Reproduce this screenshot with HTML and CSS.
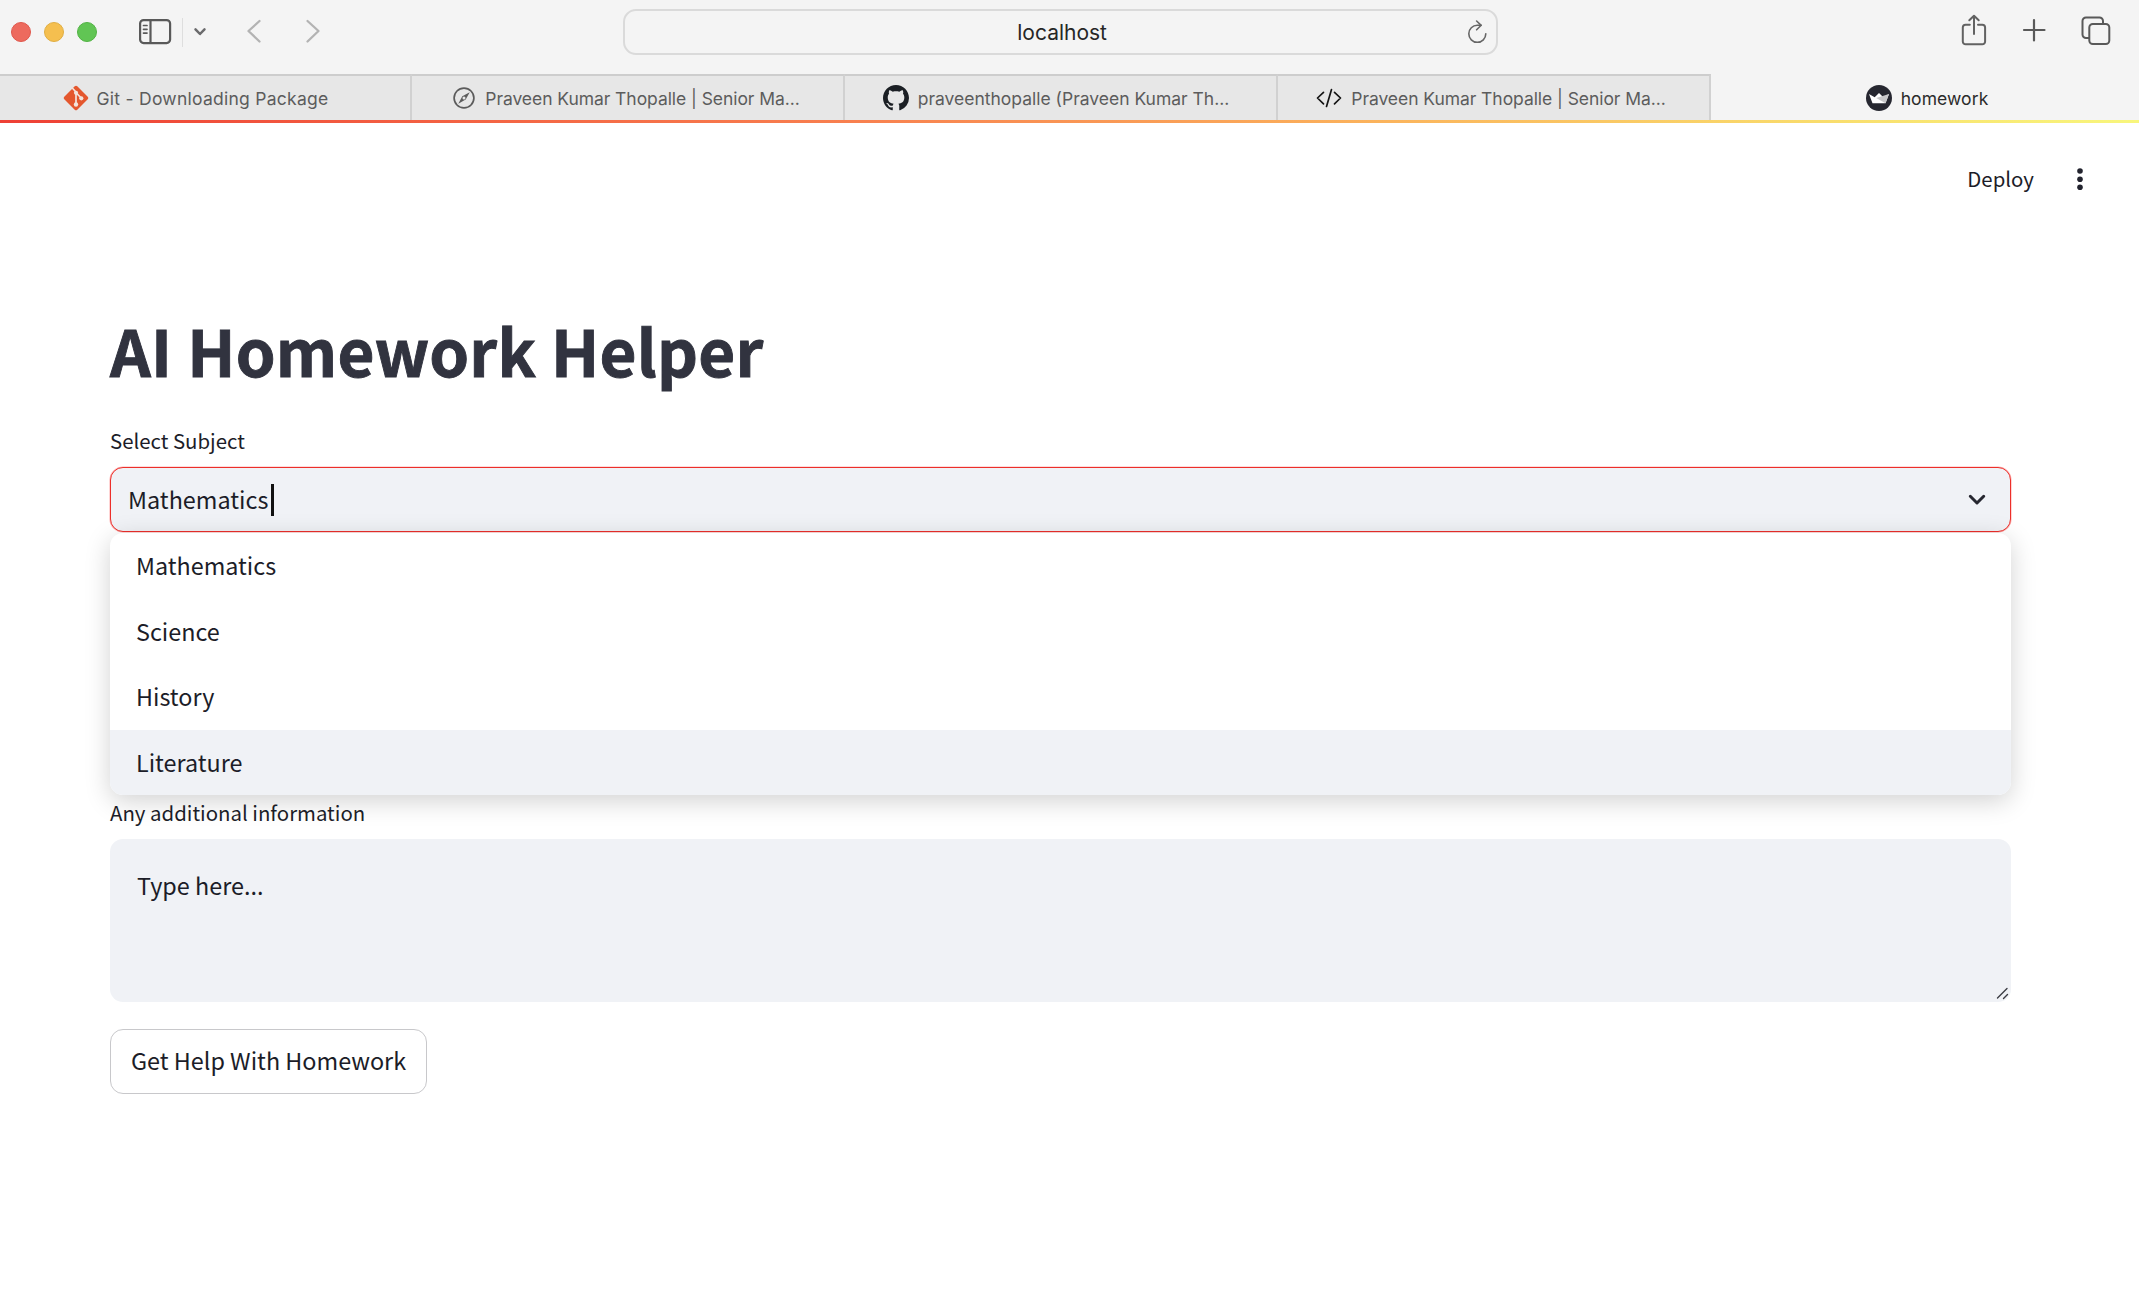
FILE: index.html
```html
<!DOCTYPE html>
<html lang="en">
<head>
<meta charset="utf-8">
<title>homework</title>
<link rel="stylesheet" href="styles.css">
</head>
<body>
<div class="window">
  <div class="toolbar">
    <div class="toolbar-left">
      <span class="light light-close"></span>
      <span class="light light-min"></span>
      <span class="light light-max"></span>
      <svg class="icon-sidebar" width="34" height="28" viewBox="0 0 34 28" fill="none" stroke="#595959" stroke-width="2.2"><rect x="2.1" y="2.1" width="30" height="23" rx="3.5"/><path d="M12.5 2v23"/><path d="M5.500 7.500h3.500M5.500 11.300h3.500M5.500 15.100h3.500" stroke-width="1.700" stroke-linecap="round"/></svg>
      <span class="divider"></span>
      <svg class="icon-down" width="14" height="10" viewBox="0 0 14 10" fill="none" stroke="#6b6b6d" stroke-width="2.500" stroke-linecap="round" stroke-linejoin="round"><path d="M2.500 2.300 7 7l4.500-4.700"/></svg>
      <svg class="icon-back" width="16" height="26" viewBox="0 0 16 26" fill="none" stroke="#b3b3b3" stroke-width="2.300" stroke-linecap="round" stroke-linejoin="round"><path d="M13.500 3 2.500 13l11 10.500"/></svg>
      <svg class="icon-forward" width="16" height="26" viewBox="0 0 16 26" fill="none" stroke="#b3b3b3" stroke-width="2.300" stroke-linecap="round" stroke-linejoin="round"><path d="M2.500 3 13.500 13l-11 10.500"/></svg>
    </div>
    <div class="address">
      <span class="address-text">localhost</span>
      <svg class="icon-reload" width="22" height="26" viewBox="0 0 22 26" fill="none" stroke="#666" stroke-width="1.600" stroke-linecap="round" stroke-linejoin="round"><path d="M15 6.300H11.300A8.500 8.500 0 1 0 19.800 14.800"/><path d="M10.600 2 15.200 6.300 10.600 10.800"/></svg>
    </div>
    <div class="toolbar-right">
      <svg class="icon-share" width="28" height="34" viewBox="0 0 28 34" fill="none" stroke="#626262" stroke-width="2" stroke-linecap="round" stroke-linejoin="round"><path d="M9.800 11.700H5.600A2.800 2.800 0 0 0 2.800 14.500v14a2.800 2.800 0 0 0 2.800 2.800h16.700a2.800 2.800 0 0 0 2.800-2.800v-14a2.800 2.800 0 0 0-2.800-2.800H18"/><path d="M14 21V3M9.300 7.300 14 2.800l4.700 4.500"/></svg>
      <svg width="24" height="24" viewBox="0 0 24 24" fill="none" stroke="#595959" stroke-width="2.200" stroke-linecap="round"><path d="M12 2v20.500M2 12h20.500"/></svg>
      <svg class="icon-overview" width="30" height="30" viewBox="0 0 30 30" fill="none" stroke="#595959" stroke-width="2"><path d="M8 22H5a3.500 3.500 0 0 1-3.500-3.500V5A3.500 3.500 0 0 1 5 1.500h13.500A3.500 3.500 0 0 1 22 5v3"/><rect x="8.300" y="8" width="20" height="20" rx="3.500"/></svg>
    </div>
  </div>
  <div class="tabs">
    <div class="tab tab-git">
      <svg width="28" height="28" viewBox="0 0 28 28"><rect x="4.800" y="4.800" width="18.400" height="18.400" rx="1.800" transform="rotate(45 14 14)" fill="#e4572e"/><g stroke="#f3e3dc" stroke-width="1.700" fill="none"><path d="M9.800 3.500 14 8v12.500M14 8.700l5.200 5.300"/></g><g fill="#f3e3dc"><circle cx="14" cy="8.800" r="2.100"/><circle cx="14" cy="20.500" r="2.200"/><circle cx="19.300" cy="14.300" r="2.100"/></g></svg>
      <span class="tab-text">Git - Downloading Package</span>
    </div>
    <div class="tab tab-compass">
      <svg width="22" height="22" viewBox="0 0 22 22"><circle cx="11" cy="11" r="9.900" fill="none" stroke="#5c5c5c" stroke-width="1.700"/><path d="M16.700 5.200 12.700 12.600 5.300 16.700 9.300 9.300Z" fill="#5c5c5c"/><circle cx="11" cy="11" r="1.500" fill="#e7e7e7"/></svg>
      <span class="tab-text">Praveen Kumar Thopalle | Senior Ma...</span>
    </div>
    <div class="tab tab-github">
      <svg width="26" height="26" viewBox="0 0 16 16" fill="#1b1f24"><path d="M8 0C3.580 0 0 3.580 0 8c0 3.540 2.290 6.530 5.470 7.590.4.070.55-.17.55-.38 0-.19-.01-.82-.01-1.490-2.010.37-2.530-.49-2.690-.94-.09-.23-.48-.94-.82-1.130-.28-.15-.68-.52-.01-.53.63-.01 1.080.58 1.230.82.72 1.210 1.870.87 2.330.66.07-.52.28-.87.51-1.070-1.780-.2-3.640-.89-3.640-3.950 0-.87.31-1.590.82-2.150-.08-.2-.36-1.020.08-2.120 0 0 .67-.21 2.200.82.64-.18 1.320-.27 2-.27s1.360.09 2 .27c1.530-1.040 2.200-.82 2.200-.82.44 1.100.16 1.920.08 2.120.51.56.82 1.270.82 2.150 0 3.070-1.870 3.750-3.650 3.950.29.25.54.73.54 1.480 0 1.070-.01 1.930-.01 2.200 0 .21.150.46.550.38A8.010 8.010 0 0 0 16 8c0-4.420-3.580-8-8-8Z"/></svg>
      <span class="tab-text">praveenthopalle (Praveen Kumar Th...</span>
    </div>
    <div class="tab tab-code">
      <svg width="26" height="20" viewBox="0 0 26 20" fill="none" stroke="#151515" stroke-width="1.700" stroke-linecap="round" stroke-linejoin="round"><path d="M7.500 4.300 1.500 10l6 5.800M18.500 4.300l6 5.700-6 5.800M15.500 1.500l-5 17"/></svg>
      <span class="tab-text">Praveen Kumar Thopalle | Senior Ma...</span>
    </div>
    <div class="tab tab-active">
      <svg width="26" height="26" viewBox="0 0 26 26"><circle cx="13" cy="13" r="13" fill="#262730"/><path d="M3 9l5.700 3.200L13 8l4.300 4.200L23 9l-3.500 9.300H6.500Z" fill="#fff"/><path d="M10.200 13 23 9l-3.500 9.300Z" fill="#c7c7c9"/></svg>
      <span class="tab-text">homework</span>
    </div>
  </div>
  <div class="decoration"></div>
  <div class="app-header">
    <span class="deploy">Deploy</span>
    <svg width="8" height="24" viewBox="0 0 8 24" fill="#22232e"><circle cx="4" cy="4" r="2.800"/><circle cx="4" cy="12.200" r="2.800"/><circle cx="4" cy="20.300" r="2.800"/></svg>
  </div>
  <main class="content">
    <h1 class="title">AI Homework Helper</h1>
    <div class="label">Select Subject</div>
    <div class="select">
      <span class="select-text">Mathematics</span><span class="caret"></span>
      <svg class="select-arrow" width="18" height="12" viewBox="0 0 18 12" fill="none" stroke="#262730" stroke-width="3" stroke-linecap="round" stroke-linejoin="round"><path d="M2.300 2.300 9 9l6.700-6.700"/></svg>
    </div>
    <ul class="menu">
      <li>Mathematics</li>
      <li>Science</li>
      <li>History</li>
      <li class="hovered">Literature</li>
    </ul>
    <div class="label label-info">Any additional information</div>
    <div class="textarea">
      <span>Type here...</span>
      <svg class="grip" width="13" height="13" viewBox="0 0 13 13" stroke="#3c3d44" stroke-width="1.400" stroke-linecap="round"><path d="M1.500 11 11 1.500M7.500 11.500l4-4"/></svg>
    </div>
    <div class="button">Get Help With Homework</div>
  </main>
</div>
</body>
</html>
```
FILE: styles.css
```css
* { box-sizing: border-box; }

body {
  margin: 0;
  background: #fff;
  color: #1c1d28;
  font-family: "Noto Sans CJK SC", "Noto Sans", sans-serif;
}

svg { display: block; flex: none; }

.window {
  width: 2139px;
  height: 1311px;
  overflow: hidden;
  background: #fff;
}

/* Browser toolbar */
.toolbar {
  height: 74px;
  display: grid;
  grid-template-columns: 623px 875px 1fr;
  background: #f4f4f4;
  font-family: Inter, sans-serif;
}

.toolbar-left { display: flex; align-items: center; height: 64px; padding-left: 11px; }
.light { width: 20px; height: 20px; border-radius: 50%; margin-right: 13px; border: 1px solid; }
.light-close { background: #ed6a5e; border-color: #e0574c; }
.light-min { background: #f5bf4f; border-color: #e0ae43; }
.light-max { background: #61c554; border-color: #52b344; }
.icon-sidebar { margin: -1px 0 0 28px; }
.divider { width: 1px; height: 29px; background: #dedede; margin-left: 10px; }
.icon-down { margin-left: 10px; }
.icon-back { margin: -2px 0 0 39px; }
.icon-forward { margin: -2px 0 0 43px; }

.address {
  height: 46px;
  margin-top: 9px;
  border: 2px solid #dadada;
  border-radius: 13px;
  display: flex;
  align-items: center;
  justify-content: flex-end;
  padding-right: 8px;
}
.address-text { margin: 2px 359px 0 auto; font-size: 21px; line-height: 42px; color: #262626; }

.toolbar-right {
  display: flex;
  align-items: center;
  justify-content: flex-end;
  height: 60px;
  gap: 34px;
  padding-right: 28px;
}
.icon-overview { margin: 2px 0 0 1px; }

/* Tab strip */
.tabs {
  height: 46px;
  display: grid;
  grid-template-columns: 412px 433px 433px 433px 1fr;
  background: #f4f4f4;
  font-family: Inter, sans-serif;
}
.tab {
  display: flex;
  align-items: center;
  justify-content: center;
  gap: 10px;
  background: #e7e7e7;
  border-top: 2px solid #cdcdcd;
  border-right: 2px solid #d1d1d1;
}
.tab-text { font-size: 17.5px; letter-spacing: -0.06px; color: #5c5c5c; white-space: nowrap; }
.tab-git { gap: 7px; padding-right: 20px; }
.tab-git .tab-text { letter-spacing: 0.26px; }
.tab-compass { padding-right: 2px; }
.tab-github { gap: 9px; padding-right: 9px; }
.tab-github .tab-text { letter-spacing: -0.01px; }
.tab-code { gap: 9px; padding-right: 5px; }
.tab-active { gap: 9px; padding-left: 6px; background: #f4f4f4; border-color: transparent; }
.tab-active .tab-text { letter-spacing: 0.08px; color: #2b2b2b; }

.decoration {
  height: 3px;
  background: linear-gradient(90deg, #ee4035, #f8804f 40%, #fbb45c 65%, #f9dc6c 85%, #f8f67c);
}

/* Application */
.app-header {
  height: 114px;
  display: flex;
  justify-content: flex-end;
  align-items: flex-start;
  gap: 42px;
  padding: 43px 55px 0 0;
}
.app-header svg { margin-top: 1px; }
.deploy { font-size: 20.4px; line-height: 24px; }

.content { padding: 73px 128px 0 110px; }

.title {
  margin: 0;
  font-size: 63.7px;
  line-height: 78px;
  font-weight: 700;
  letter-spacing: 0.28px;
  color: #31333f;
  -webkit-text-stroke: 0.9px #31333f;
}
.label { margin-top: 37px; font-size: 20.4px; line-height: 30px; }

.select {
  height: 65px;
  margin-top: 12px;
  display: flex;
  align-items: center;
  border: 1px solid #ec2f2a;
  box-shadow: 0 0 0 0.6px rgba(255, 75, 75, 0.4);
  border-radius: 13px;
  background: #f0f2f6;
  padding: 0 24px 0 17px;
  font-size: 23.4px;
}
.select-text { line-height: 62px; margin-bottom: 2px; }
.caret { width: 3px; height: 32px; margin-left: 3px; background: #111; }
.select-arrow { margin-left: auto; }

.menu {
  position: relative;
  margin: 1px 0 0;
  padding: 0;
  list-style: none;
  border-radius: 13px;
  overflow: hidden;
  background: #fff;
  box-shadow: 0 6px 26px rgba(0, 0, 0, 0.18);
  font-size: 23.35px;
}
.menu li { height: 65.5px; line-height: 64.5px; padding-left: 26px; }
.menu .hovered { background: #f0f2f6; }

.label-info { position: relative; margin-top: 2px; }

.textarea {
  height: 163px;
  margin-top: 12px;
  padding: 29px 2px 2px 27px;
  display: flex;
  justify-content: space-between;
  border-radius: 13px;
  background: #f0f2f6;
  font-size: 23.4px;
  line-height: 34px;
}
.grip { align-self: flex-end; }

.button {
  width: 317px;
  height: 65px;
  margin-top: 27px;
  padding: 0 0 3px;
  display: flex;
  align-items: center;
  justify-content: center;
  border: 1px solid #c8c8cb;
  border-radius: 13px;
  font-size: 23.4px;
}
```
